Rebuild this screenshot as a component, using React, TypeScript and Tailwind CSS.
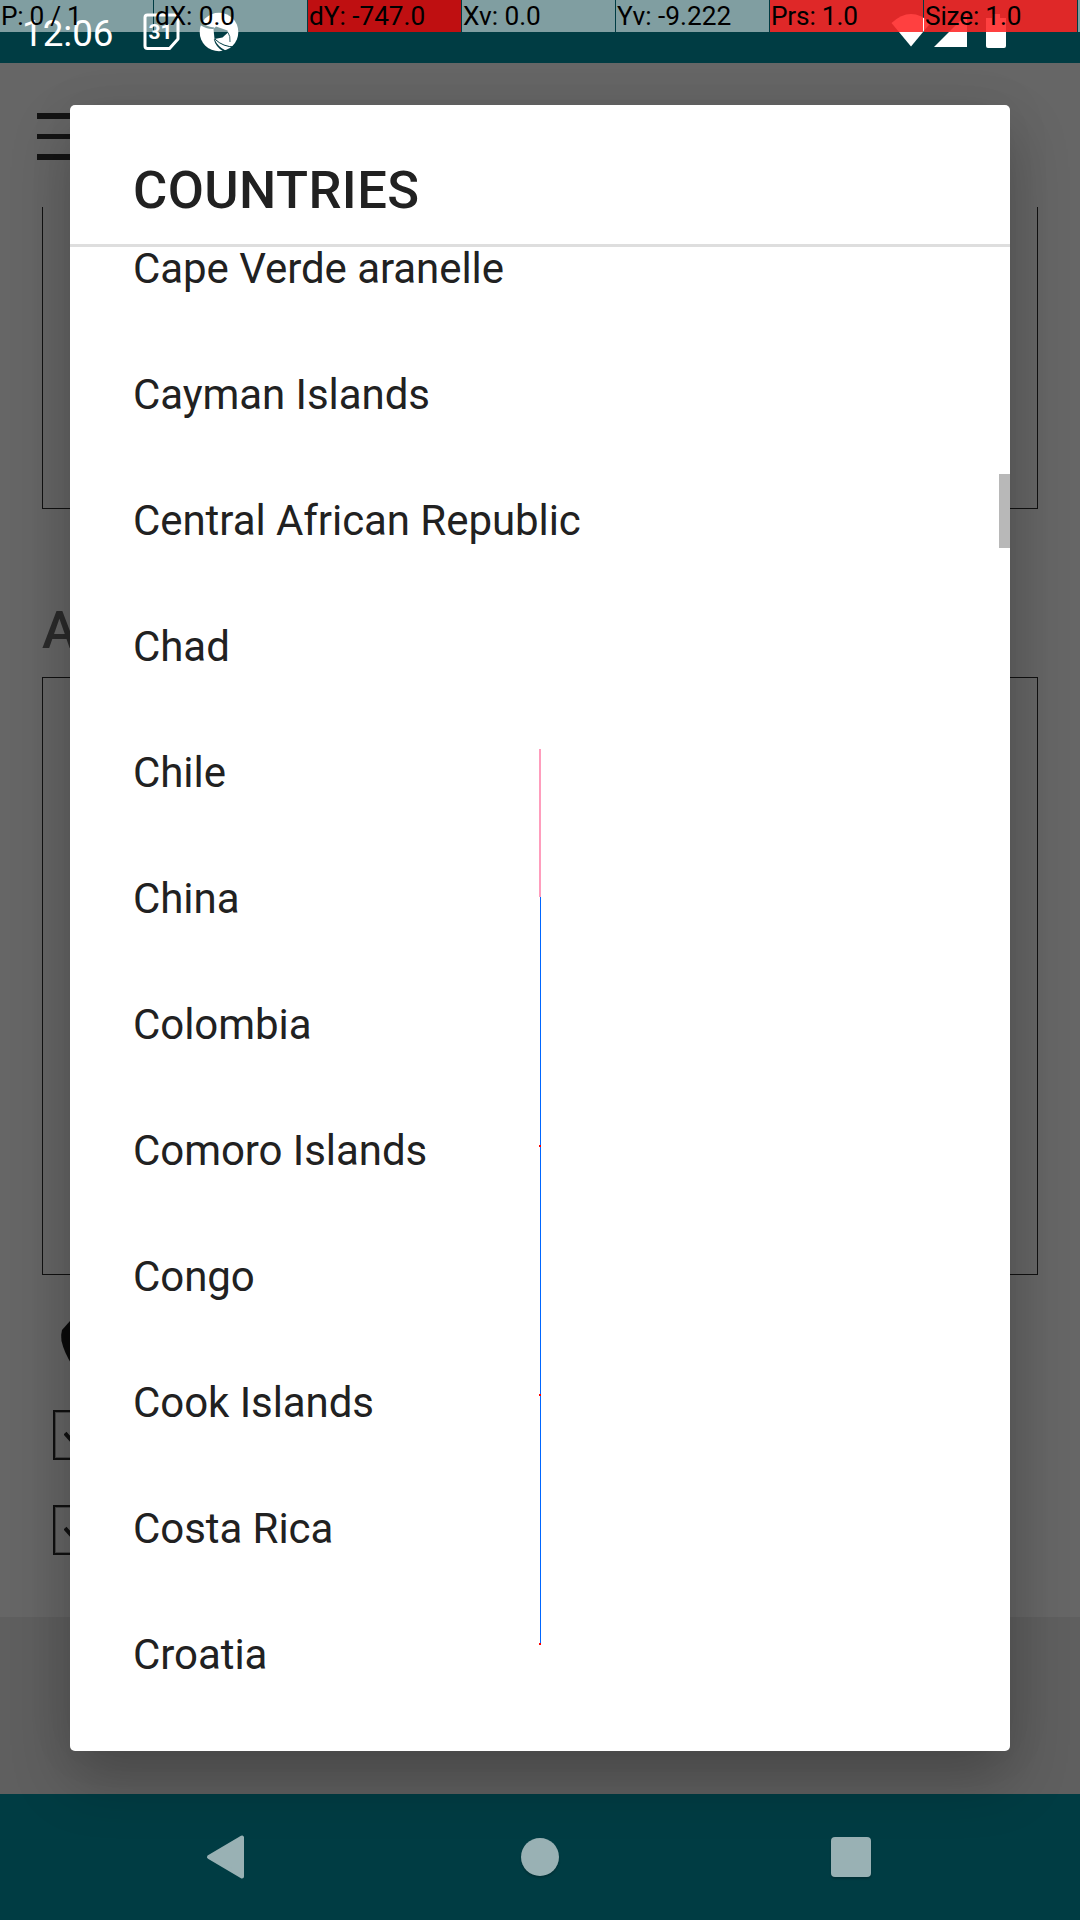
import React from "react";

const countries = [
  "Cape Verde aranelle",
  "Cayman Islands",
  "Central African Republic",
  "Chad",
  "Chile",
  "China",
  "Colombia",
  "Comoro Islands",
  "Congo",
  "Cook Islands",
  "Costa Rica",
  "Croatia",
];

const readouts = [
  { text: "P: 0 / 1", hot: "", spacing: "tracking-[-0.3px]" },
  { text: "dX: 0.0", hot: "", spacing: "tracking-[-0.1px]" },
  { text: "dY: -747.0", hot: "solo", spacing: "tracking-[-0.05px]" },
  { text: "Xv: 0.0", hot: "", spacing: "tracking-[-0.05px]" },
  { text: "Yv: -9.222", hot: "", spacing: "tracking-normal" },
  { text: "Prs: 1.0", hot: "both", spacing: "tracking-[-0.2px]" },
  { text: "Size: 1.0", hot: "both", spacing: "tracking-[-0.2px]" },
];

function PointerBar() {
  return (
    <div className="absolute inset-x-0 top-0 z-30 flex h-8 gap-px overflow-hidden">
      {readouts.map((r) => (
        <div
          key={r.text}
          className={
            "h-8 w-[153px] shrink-0 " + (r.hot === "solo" ? "" : "bg-white/50")
          }
        >
          <div
            className={
              "h-8 whitespace-nowrap pl-px text-[26.25px] leading-8 text-black " +
              r.spacing +
              (r.hot ? " bg-[#ff0000]/75" : "")
            }
          >
            {r.text}
          </div>
        </div>
      ))}
      <div className="h-8 grow bg-white/50" />
    </div>
  );
}

function StatusBar() {
  return (
    <div className="flex h-[63px] items-start bg-[#003c43] pl-[22px] text-white">
      <span className="mt-[12px] w-[121px] text-[36.75px] leading-[43px]">12:06</span>
      <svg className="mt-[13px] h-[38px] w-[37px]" viewBox="0 0 37 38">
        <path d="M4.500 2H32Q35 2 35 5V26L26.500 35.500H4.500Q2 35.500 2 33V4.500Q2 2 4.500 2Z" fill="none" stroke="white" strokeWidth="3" strokeLinejoin="round" />
        <text x="17.500" y="25.500" textAnchor="middle" fontFamily="Roboto" fontSize="21" fontWeight="700" fill="white">31</text>
      </svg>
      <svg className="ml-[19px] mt-[12px] h-[40px] w-[40px]" viewBox="0 0 40 40">
        <circle cx="20" cy="20" r="19.300" fill="white" />
        <path d="M14.500 17L17 14.500L28.500 18.500L29 20.500L23.500 25.500L15.500 27Z" fill="#003c43" />
        <path d="M0.500 12.500Q8 17.500 14.500 17L15.500 15.500Q8 15 2.500 10Z" fill="#003c43" />
        <path d="M15.500 27Q18.500 34.500 26.500 38.500L24.500 39.500Q16.500 35 14.800 27Z" fill="#003c43" />
        <path d="M16 27.200Q24 35 36 35" fill="none" stroke="#003c43" strokeWidth="1" />
        <path d="M29 20.500Q31.500 24 31 30" fill="none" stroke="#003c43" strokeWidth="0.800" />
      </svg>
      <svg className="ml-auto mr-[73px] mt-[13px] h-[36px] w-[116px]" viewBox="0 0 116 36">
        <path d="M0.500 10Q20 -8 39.500 10L20 33.500Z" fill="white" />
        <path d="M76 1V34H43Z" fill="white" />
        <path d="M95 5H101V1H109V5H115V33Q115 35 113 35H97Q95 35 95 33Z" fill="white" />
      </svg>
    </div>
  );
}

function Checkbox() {
  return (
    <div className="flex h-[50px] w-[50px] items-center border-2 border-[#111] pl-[9px] shadow-[inset_0_0_0_1px_rgba(17,17,17,0.35)]">
      <svg className="h-[30px] w-[30px]" viewBox="0 0 30 30">
        <path d="M1 13L9 22L26 5" fill="none" stroke="#111" strokeWidth="4" />
      </svg>
    </div>
  );
}

function Backdrop() {
  return (
    <div className="flex h-[1731px] flex-col bg-[#666]">
      <div className="flex h-[144px] flex-col gap-[15px] pl-[36.500px] pt-[50px]">
        <div className="h-[5.500px] w-[60px] bg-[#141414]" />
        <div className="h-[5.500px] w-[60px] bg-[#141414]" />
        <div className="h-[5.500px] w-[60px] bg-[#141414]" />
      </div>
      <div className="mx-[42px] h-[302px] border border-t-0 border-[#111]" />
      <div className="flex h-[168px] items-end pb-[17px] pl-[42px] text-[52.500px] font-medium leading-[60px] text-[#2b2b2b]">
        A
      </div>
      <div className="mx-[42px] h-[598px] border border-[#111]" />
      <div className="flex h-[342px] flex-col pl-[53px]">
        <svg className="ml-[7px] mt-[36px] h-[60px] w-[60px]" viewBox="0 0 60 60">
          <path d="M10 10L2 19Q0.500 24 1.500 30Q4 41 12 54L40 54V4Z" fill="#0b0b0b" />
        </svg>
        <div className="mt-[39px]"><Checkbox /></div>
        <div className="mt-[45px]"><Checkbox /></div>
      </div>
      <div className="grow bg-[#5f5f5f]" />
    </div>
  );
}

function NavBar() {
  return (
    <div className="flex h-[126px] items-center bg-[#003c43]">
      <svg className="ml-[206px] h-[50px] w-[40px]" viewBox="0 0 40 50">
        <path d="M3 25L36 5.500V44.500Z" fill="#99b1b4" stroke="#99b1b4" strokeWidth="4" strokeLinejoin="round" />
      </svg>
      <div className="ml-[275px] h-[38px] w-[38px] rounded-full bg-[#99b1b4] shadow-[0_2px_2px_rgba(0,0,0,0.2)]" />
      <div className="ml-[272px] h-[40px] w-[40px] rounded-[4px] bg-[#99b1b4] shadow-[0_2px_2px_rgba(0,0,0,0.2)]" />
    </div>
  );
}

function CountryDialog() {
  return (
    <div className="absolute left-[70px] top-[105px] z-10 flex h-[1646px] w-[940px] flex-col overflow-hidden rounded-[5px] bg-white text-[#212121]">
      <div className="h-[142px] shrink-0 border-b-[3px] border-[#dedede] pl-[63px] pt-[54px] text-[52.500px] font-medium leading-[62px] tracking-[0.42px]">
        COUNTRIES
      </div>
      <ul className="-mt-[42px]">
        {countries.map((name) => (
          <li key={name} className="flex h-[126px] items-center pl-[63px] text-[42px] tracking-[-0.06px]">
            {name}
          </li>
        ))}
      </ul>
      <div className="absolute right-0 top-[369px] h-[74px] w-[11px] bg-[#b8b8b8]" />
    </div>
  );
}

function TouchTrail() {
  return (
    <svg className="absolute left-[539px] top-[749px] z-20 h-[897px] w-[2px]" viewBox="0 0 2 897" shapeRendering="crispEdges">
      <rect x="1" y="148" width="1" height="747" fill="#0066ff" />
      <rect x="0" y="0" width="2" height="148" fill="#ff9dbd" />
      {[396, 645, 894].map((y) => (
        <rect key={y} x="0" y={y} width="2" height="2" fill="#ff0000" />
      ))}
    </svg>
  );
}

export default function App() {
  return (
    <div className="relative h-[1920px] w-[1080px] overflow-hidden font-['Roboto',sans-serif]">
      <StatusBar />
      <Backdrop />
      <NavBar />
      <div className="absolute left-[70px] top-[105px] h-[1646px] w-[940px] rounded-[5px] shadow-[0_28px_60px_rgba(0,0,0,0.24),0_0_50px_rgba(0,0,0,0.06)]" />
      <CountryDialog />
      <TouchTrail />
      <PointerBar />
    </div>
  );
}
